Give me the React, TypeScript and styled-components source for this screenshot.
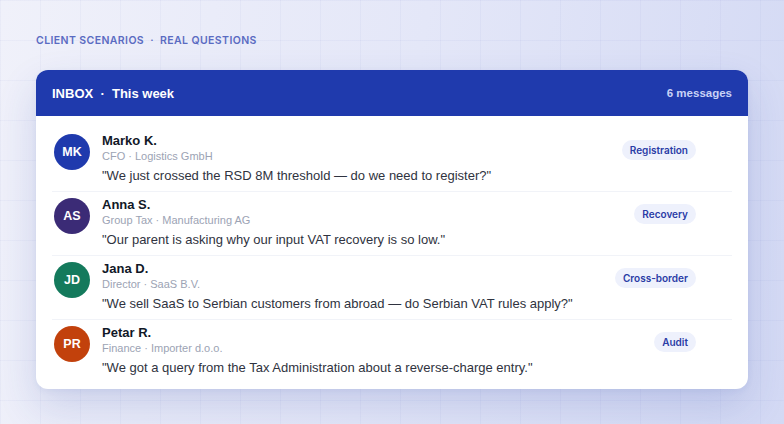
import React from "react";
import styled, { createGlobalStyle } from "styled-components";

const Global = createGlobalStyle`
  html, body { margin: 0; padding: 0; }
  body { font-family: "Liberation Sans", Arial, sans-serif; }
`;

const Page = styled.div`
  box-sizing: border-box;
  width: 784px;
  height: 424px;
  padding: 33px 36px 0 36px;
  overflow: hidden;
  background-color: #e6e9f8;
  background-image:
    linear-gradient(rgba(70, 90, 190, 0.045) 1px, transparent 1px),
    linear-gradient(90deg, rgba(70, 90, 190, 0.045) 1px, transparent 1px),
    linear-gradient(100deg, #f0f1fa 0%, #e4e7f8 50%, #d3d9f4 100%);
  background-size: 40px 40px, 40px 40px, 100% 100%;
`;

const Eyebrow = styled.div`
  font-family: Inter, "Liberation Sans", sans-serif;
  font-size: 10.5px;
  font-weight: 600;
  letter-spacing: 0.4px;
  line-height: 16px;
  color: #5a6bc2;
  margin-bottom: 21px;
`;

const Card = styled.div`
  width: 712px;
  background: #ffffff;
  border-radius: 12px;
  overflow: hidden;
  box-shadow: 0 18px 40px rgba(40, 60, 160, 0.16), 0 2px 6px rgba(40, 60, 160, 0.06);
`;

const Header = styled.div`
  height: 46px;
  background: #1f3aad;
  display: flex;
  align-items: center;
  justify-content: space-between;
  padding: 0 16px;
`;

const HeaderTitle = styled.div`
  font-size: 13px;
  font-weight: 700;
  color: #ffffff;
`;

const HeaderCount = styled.div`
  font-size: 11.5px;
  font-weight: 700;
  color: #c8d2f6;
`;

const Body = styled.div`
  padding: 12px 16px 6px 16px;
`;

const Row = styled.div`
  display: flex;
  align-items: flex-start;
  gap: 12px;
  padding: 6px 36px 6px 2px;
  border-bottom: 1px solid #f1f3f8;
  &:last-child { border-bottom: none; }
`;

const Avatar = styled.div<{ $bg: string }>`
  flex: 0 0 36px;
  width: 36px;
  height: 36px;
  border-radius: 50%;
  background: ${(p) => p.$bg};
  color: #ffffff;
  font-size: 12.5px;
  font-weight: 700;
  display: flex;
  align-items: center;
  justify-content: center;
`;

const Text = styled.div`
  flex: 1;
  min-width: 0;
  margin-top: -2px;
`;

const Name = styled.div`
  font-size: 13px;
  font-weight: 700;
  line-height: 17px;
  color: #111827;
`;

const Role = styled.div`
  font-size: 11px;
  line-height: 14px;
  color: #9ca3b4;
`;

const Quote = styled.div`
  margin-top: 4px;
  font-size: 13px;
  line-height: 18px;
  color: #2f3340;
`;

const Tag = styled.div`
  margin-top: 6px;
  height: 20px;
  padding: 0 8px;
  border-radius: 10px;
  background: #eef1fc;
  color: #2a3ca6;
  font-family: Inter, "Liberation Sans", sans-serif;
  font-size: 10px;
  font-weight: 600;
  display: flex;
  align-items: center;
  white-space: nowrap;
`;

const messages = [
  { initials: "MK", color: "#1f3aad", name: "Marko K.", role: "CFO · Logistics GmbH", quote: "\"We just crossed the RSD 8M threshold — do we need to register?\"", tag: "Registration" },
  { initials: "AS", color: "#3b2b76", name: "Anna S.", role: "Group Tax · Manufacturing AG", quote: "\"Our parent is asking why our input VAT recovery is so low.\"", tag: "Recovery" },
  { initials: "JD", color: "#147a5c", name: "Jana D.", role: "Director · SaaS B.V.", quote: "\"We sell SaaS to Serbian customers from abroad — do Serbian VAT rules apply?\"", tag: "Cross-border" },
  { initials: "PR", color: "#c2410c", name: "Petar R.", role: "Finance · Importer d.o.o.", quote: "\"We got a query from the Tax Administration about a reverse-charge entry.\"", tag: "Audit" },
];

export default function App() {
  return (
    <Page>
      <Global />
      <Eyebrow>CLIENT SCENARIOS &nbsp;·&nbsp; REAL QUESTIONS</Eyebrow>
      <Card>
        <Header>
          <HeaderTitle>INBOX &nbsp;·&nbsp; This week</HeaderTitle>
          <HeaderCount>6 messages</HeaderCount>
        </Header>
        <Body>
          {messages.map((m) => (
            <Row key={m.initials}>
              <Avatar $bg={m.color}>{m.initials}</Avatar>
              <Text>
                <Name>{m.name}</Name>
                <Role>{m.role}</Role>
                <Quote>{m.quote}</Quote>
              </Text>
              <Tag>{m.tag}</Tag>
            </Row>
          ))}
        </Body>
      </Card>
    </Page>
  );
}
